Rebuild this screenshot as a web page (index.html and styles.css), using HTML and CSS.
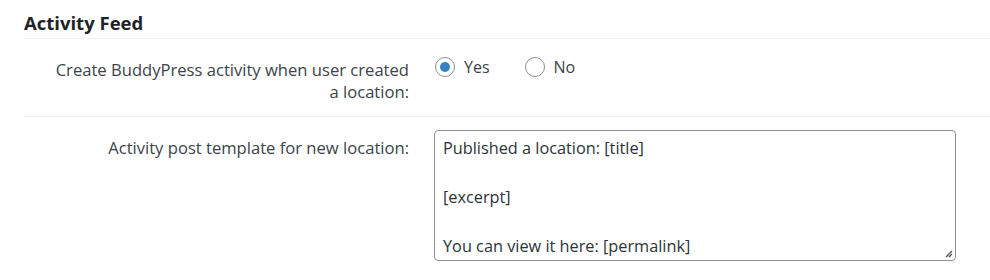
FILE: index.html
```html
<!DOCTYPE html>
<html lang="en">
<head>
  <meta charset="UTF-8" />
  <title>Activity Feed</title>
  <link rel="stylesheet" href="styles.css">
</head>
<body>

<div class="settings">
  <h2 class="section-title">Activity Feed</h2>

  <div class="row">
    <div class="label">Create BuddyPress activity when user created a location:</div>
    <div class="field radios">
      <label class="radio"><span class="dot checked"></span>Yes</label>
      <label class="radio"><span class="dot"></span>No</label>
    </div>
  </div>

  <div class="row row-text">
    <div class="label">Activity post template for new location:</div>
    <div class="field">
      <div class="textarea">Published a location: [title]

[excerpt]

You can view it here: [permalink]<svg class="grip" width="9" height="9" viewBox="0 0 9 9"><path d="M8 2 L2 8 M8 5 L5 8" stroke="#555" stroke-width="1.4" fill="none"/></svg></div>
    </div>
  </div>
</div>

</body>
</html>
```

FILE: styles.css
```css
html, body {
  margin: 0;
  padding: 0;
  background: #fff;
  color: #3c434a;
  font-family: 'Open Sans', sans-serif;
  font-size: 16.6px;
}

.settings {
  padding-left: 24px;
}

.section-title {
  margin: 0;
  height: 39px;
  box-sizing: border-box;
  padding-top: 11px;
  font-size: 18.5px;
  font-weight: bold;
  color: #1d2327;
  line-height: 24px;
  border-bottom: 1px solid #f0f0f1;
}

.row {
  display: grid;
  grid-template-columns: 385px 1fr;
  column-gap: 26px;
  border-bottom: 1px solid #f0f0f1;
  padding: 20px 0 13px;
}

.label {
  text-align: right;
  line-height: 22px;
  padding-left: 30px;
}

.radios {
  display: flex;
  gap: 35px;
  align-items: flex-start;
  margin-top: -3px;
  font-size: 16px;
}

.radio {
  display: flex;
  align-items: center;
  gap: 9px;
  line-height: 22px;
  color: #3c434a;
}

.dot {
  width: 20px;
  height: 20px;
  box-sizing: border-box;
  border: 1px solid #8c8f94;
  border-radius: 50%;
  display: flex;
  align-items: center;
  justify-content: center;
}

.dot.checked::after {
  content: "";
  width: 10px;
  height: 10px;
  border-radius: 50%;
  background: #3582c4;
}

.row-text {
  border-bottom: none;
  padding-top: 13px;
}

.row-text .label {
  margin-top: 7px;
}

.textarea {
  position: relative;
  width: 522px;
  height: 131px;
  box-sizing: border-box;
  margin-left: -1px;
  border: 1px solid #8c8f94;
  border-radius: 4px;
  padding: 5px 8px 2px;
  white-space: pre-wrap;
  font-size: 16.3px;
  line-height: 24.5px;
  color: #2c3338;
  overflow: hidden;
}

.grip {
  position: absolute;
  right: 2px;
  bottom: 2px;
}
```
